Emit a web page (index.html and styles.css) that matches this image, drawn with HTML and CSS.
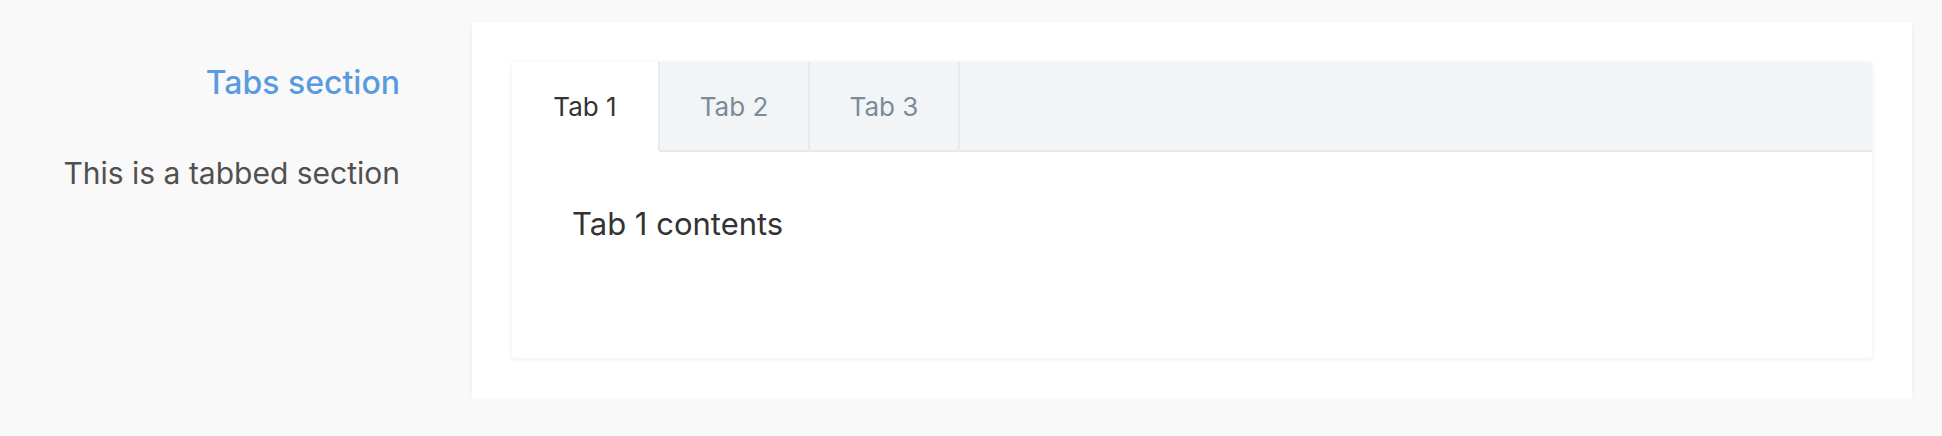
FILE: index.html
```html
<!DOCTYPE html>
<html>
<head>
<meta charset="utf-8">
<link rel="stylesheet" href="styles.css">
</head>
<body>
<div class="page">
  <div class="side">
    <h2 class="side-title">Tabs section</h2>
    <p class="side-desc">This is a tabbed section</p>
  </div>
  <div class="card">
    <div class="tabs">
      <div class="tab-bar">
        <div class="tab active">Tab 1</div>
        <div class="tab">Tab 2</div>
        <div class="tab">Tab 3</div>
        <div class="tab-fill"></div>
      </div>
      <div class="tab-panel">Tab 1 contents</div>
    </div>
  </div>
</div>
</body>
</html>
```
FILE: styles.css
```css
html, body {
  margin: 0;
  padding: 0;
  background: #f9f9f9;
  font-family: Inter, "Noto Sans", sans-serif;
}
.page {
  display: flex;
  align-items: flex-start;
  gap: 72px;
  padding-top: 22px;
}
.side {
  width: 400px;
  text-align: right;
  flex-shrink: 0;
}
.side-title {
  margin: 0;
  padding-top: 41px;
  font-size: 32px;
  font-weight: 500;
  line-height: 40px;
  color: #5a9be0;
}
.side-desc {
  margin: 50px 0 0;
  font-size: 30px;
  line-height: 40px;
  color: #505050;
}
.card {
  width: 1440px;
  box-sizing: border-box;
  padding: 40px;
  background: #fff;
  box-shadow: 0 2px 6px rgba(0,0,0,0.06);
}
.tabs {
  background: #fff;
  box-shadow: 0 1px 5px rgba(0,0,0,0.08);
}
.tab-bar {
  display: flex;
  height: 90px;
  background: #f3f4f6;
}
.tab {
  width: 146px;
  display: flex;
  align-items: center;
  justify-content: center;
  font-size: 26px;
  color: #7a8b9b;
  border-right: 2px solid #e8ebee;
  border-bottom: 2px solid #e6e9ec;
}
.tab.active {
  background: #fff;
  color: #333;
  border-bottom-color: #fff;
}
.tab + .tab { width: 148px; }
.tab-fill {
  flex: 1;
  border-bottom: 2px solid #e6e9ec;
}
.tab-panel {
  height: 206px;
  box-sizing: border-box;
  padding: 52px 60px 0;
  font-size: 31px;
  line-height: 40px;
  color: #333;
}
```
